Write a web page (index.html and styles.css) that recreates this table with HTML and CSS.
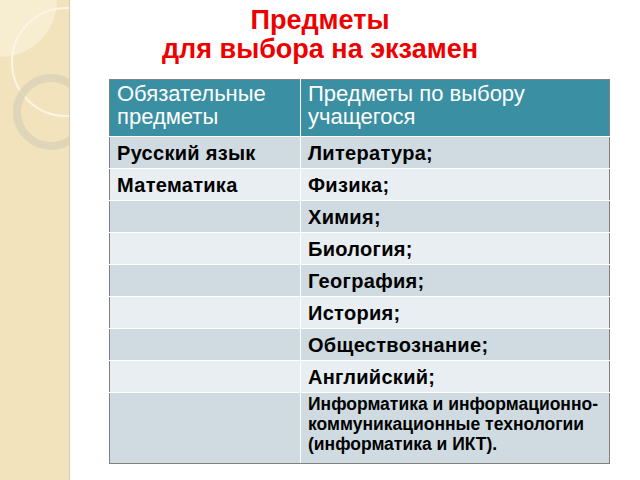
FILE: index.html
```html
<!DOCTYPE html>
<html lang="ru">
<head>
<meta charset="utf-8">
<title>Предметы для выбора на экзамен</title>
<link rel="stylesheet" href="styles.css">
</head>
<body>
<div class="slide">
  <aside class="sidebar">
    <svg class="deco" width="69" height="480" viewBox="0 0 69 480" xmlns="http://www.w3.org/2000/svg">
      <circle cx="0" cy="0" r="57" fill="#f7edd3" opacity="0.9"/>
      <circle cx="66" cy="62" r="54" fill="none" stroke="#fbf5e3" stroke-width="2"/>
      <circle cx="51" cy="112" r="34" fill="none" stroke="#dcd2b9" stroke-width="8" opacity="0.85"/>
    </svg>
  </aside>
  <main class="content">
    <h1 class="title">Предметы<br>для выбора на экзамен</h1>
    <table class="subjects">
      <thead>
        <tr><th class="c1">Обязательные предметы</th><th class="c2">Предметы по выбору учащегося</th></tr>
      </thead>
      <tbody>
        <tr class="dark"><td>Русский язык</td><td>Литература;</td></tr>
        <tr class="light"><td>Математика</td><td>Физика;</td></tr>
        <tr class="dark"><td></td><td>Химия;</td></tr>
        <tr class="light"><td></td><td>Биология;</td></tr>
        <tr class="dark"><td></td><td>География;</td></tr>
        <tr class="light"><td></td><td>История;</td></tr>
        <tr class="dark"><td></td><td>Обществознание;</td></tr>
        <tr class="light"><td></td><td>Английский;</td></tr>
        <tr class="dark last"><td></td><td class="small">Информатика и информационно-коммуникационные технологии (информатика и ИКТ).</td></tr>
      </tbody>
    </table>
  </main>
</div>
</body>
</html>
```

FILE: styles.css
```css
html, body {
  margin: 0;
  padding: 0;
  background: #ffffff;
}

.slide {
  width: 640px;
  height: 480px;
  display: flex;
  overflow: hidden;
  font-family: "Liberation Sans", Arial, sans-serif;
}

.sidebar {
  width: 69px;
  height: 480px;
  flex: none;
  background: #f2e3bc;
  border-right: 1px solid #d9ccab;
}

.deco {
  display: block;
}

.content {
  flex: 1;
  display: flex;
  flex-direction: column;
}

.title {
  margin: 6px 0 0 0;
  width: 500px;
  text-align: center;
  color: #ee0000;
  font-size: 27px;
  line-height: 29px;
  font-weight: bold;
}

.subjects {
  margin: 15px 0 0 39px;
  width: 501px;
  table-layout: fixed;
  border-collapse: collapse;
  border: 1px solid #808080;
}

.subjects th, .subjects td {
  text-align: left;
  vertical-align: top;
  border: 1px solid #ffffff;
  padding-left: 7px;
  padding-right: 4px;
}

.subjects th {
  background: #3a8fa3;
  color: #ffffff;
  font-weight: normal;
  font-size: 22px;
  line-height: 23px;
  padding-top: 2px;
  padding-bottom: 8px;
  height: 46px;
  border-top: 1px solid #808080;
}

.subjects .c1 {
  width: 179px;
  border-left: 1px solid #808080;
}

.subjects .c2 {
  border-right: 1px solid #808080;
}

.subjects td {
  color: #000000;
  font-weight: bold;
  font-size: 20px;
  line-height: 22px;
  letter-spacing: 0.3px;
  padding-top: 5px;
  padding-bottom: 4px;
  height: 22px;
}

.subjects td:first-child {
  border-left: 1px solid #808080;
}

.subjects td:last-child {
  border-right: 1px solid #808080;
}

.dark td {
  background: #cfdbe1;
}

.light td {
  background: #e8eef1;
}

.last td {
  border-bottom: 1px solid #808080;
  padding-top: 1px;
  padding-bottom: 9px;
}

.subjects td.small {
  font-size: 17.5px;
  line-height: 20px;
  letter-spacing: 0;
  height: 60px;
}
```
